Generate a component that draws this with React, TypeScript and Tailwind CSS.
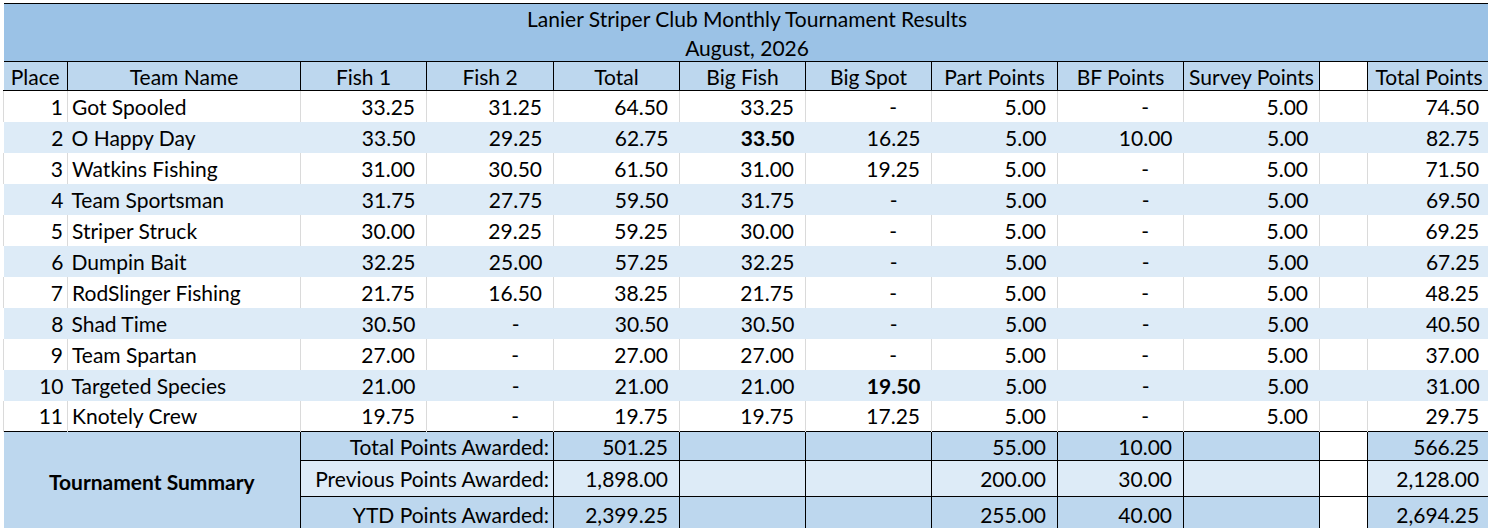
import React from 'react';

type Row = {
  place: number;
  team: string;
  values: string[];
  bold?: number;
};

const rows: Row[] = [
  { place: 1, team: 'Got Spooled', values: ['33.25', '31.25', '64.50', '33.25', '-', '5.00', '-', '5.00', '', '74.50'] },
  { place: 2, team: 'O Happy Day', values: ['33.50', '29.25', '62.75', '33.50', '16.25', '5.00', '10.00', '5.00', '', '82.75'], bold: 3 },
  { place: 3, team: 'Watkins Fishing', values: ['31.00', '30.50', '61.50', '31.00', '19.25', '5.00', '-', '5.00', '', '71.50'] },
  { place: 4, team: 'Team Sportsman', values: ['31.75', '27.75', '59.50', '31.75', '-', '5.00', '-', '5.00', '', '69.50'] },
  { place: 5, team: 'Striper Struck', values: ['30.00', '29.25', '59.25', '30.00', '-', '5.00', '-', '5.00', '', '69.25'] },
  { place: 6, team: 'Dumpin Bait', values: ['32.25', '25.00', '57.25', '32.25', '-', '5.00', '-', '5.00', '', '67.25'] },
  { place: 7, team: 'RodSlinger Fishing', values: ['21.75', '16.50', '38.25', '21.75', '-', '5.00', '-', '5.00', '', '48.25'] },
  { place: 8, team: 'Shad Time', values: ['30.50', '-', '30.50', '30.50', '-', '5.00', '-', '5.00', '', '40.50'] },
  { place: 9, team: 'Team Spartan', values: ['27.00', '-', '27.00', '27.00', '-', '5.00', '-', '5.00', '', '37.00'] },
  { place: 10, team: 'Targeted Species', values: ['21.00', '-', '21.00', '21.00', '19.50', '5.00', '-', '5.00', '', '31.00'], bold: 4 },
  { place: 11, team: 'Knotely Crew', values: ['19.75', '-', '19.75', '19.75', '17.25', '5.00', '-', '5.00', '', '29.75'] },
];

const headers = ['Place', 'Team Name', 'Fish 1', 'Fish 2', 'Total', 'Big Fish', 'Big Spot', 'Part Points', 'BF Points', 'Survey Points', '', 'Total Points'];
const widths = [64, 233, 126, 127, 126, 126, 126, 126, 126, 136, 48, 123];

const summary = [
  { label: 'Total Points Awarded:', total: '501.25', part: '55.00', bf: '10.00', grand: '566.25', h: 'h-[29px]', bg: 'bg-[#bdd7ee]' },
  { label: 'Previous Points Awarded:', total: '1,898.00', part: '200.00', bf: '30.00', grand: '2,128.00', h: 'h-[36px]', bg: 'bg-[#ddebf7]' },
  { label: 'YTD Points Awarded:', total: '2,399.25', part: '255.00', bf: '40.00', grand: '2,694.25', h: 'h-[35px]', bg: 'bg-[#bdd7ee]' },
];

const App: React.FC = () => {
  return (
    <div className="w-[1488px] h-[528px] overflow-hidden bg-white pt-[3px] pl-[3px] text-black font-['Lato','Liberation_Sans',sans-serif] text-[21px] leading-none">
      <table className="table-fixed border-collapse w-[1487px]">
        <colgroup>
          {widths.map((w, i) => (
            <col key={i} style={{ width: w }} />
          ))}
        </colgroup>
        <tbody>
          <tr className="h-[30px] bg-[#9bc2e6]">
            <td colSpan={12} className="border-t border-black text-center align-middle">
              Lanier Striper Club Monthly Tournament Results
            </td>
          </tr>
          <tr className="h-[28px] bg-[#9bc2e6]">
            <td colSpan={12} className="text-center align-middle">
              August, 2026
            </td>
          </tr>
          <tr className="h-[29px]">
            {headers.map((h, i) => (
              <td
                key={i}
                className={`border border-black text-center align-middle whitespace-nowrap ${
                  i === 10 ? 'bg-white' : 'bg-[#bdd7ee]'
                } ${i === 0 ? 'border-l-0' : ''}`}
              >
                {h}
              </td>
            ))}
          </tr>
          {rows.map((r, ri) => {
            const shaded = ri % 2 === 1;
            const cellBorder = shaded ? 'bg-[#ddebf7]' : 'bg-white border-x border-[#dadada]';
            return (
              <tr key={r.place} className="h-[31px]">
                <td className={`${cellBorder} text-right pr-[4px] align-middle`}>{r.place}</td>
                <td className={`${cellBorder} text-left pl-[4px] align-middle whitespace-nowrap`}>{r.team}</td>
                {r.values.map((v, vi) => (
                  <td
                    key={vi}
                    className={`${cellBorder} text-right align-middle whitespace-nowrap ${
                      v === '-' ? 'pr-[34px]' : 'pr-[11px]'
                    } ${r.bold === vi ? 'font-bold' : ''}`}
                  >
                    {v}
                  </td>
                ))}
              </tr>
            );
          })}
          {summary.map((s, si) => (
            <tr key={s.label} className={s.h}>
              {si === 0 && (
                <td colSpan={2} rowSpan={3} className="bg-[#bdd7ee] border border-black border-l-0 text-center align-middle font-bold">
                  Tournament Summary
                </td>
              )}
              <td colSpan={2} className={`${s.bg} border border-black text-right pr-[4px] align-middle whitespace-nowrap`}>
                {s.label}
              </td>
              <td className={`${s.bg} border border-black text-right pr-[11px] align-middle`}>{s.total}</td>
              <td className={`${s.bg} border border-black`} />
              <td className={`${s.bg} border border-black`} />
              <td className={`${s.bg} border border-black text-right pr-[11px] align-middle`}>{s.part}</td>
              <td className={`${s.bg} border border-black text-right pr-[11px] align-middle`}>{s.bf}</td>
              <td className={`${s.bg} border border-black`} />
              <td className="bg-white border border-black" />
              <td className={`${s.bg} border border-black text-right pr-[11px] align-middle`}>{s.grand}</td>
            </tr>
          ))}
        </tbody>
      </table>
    </div>
  );
};

export default App;
